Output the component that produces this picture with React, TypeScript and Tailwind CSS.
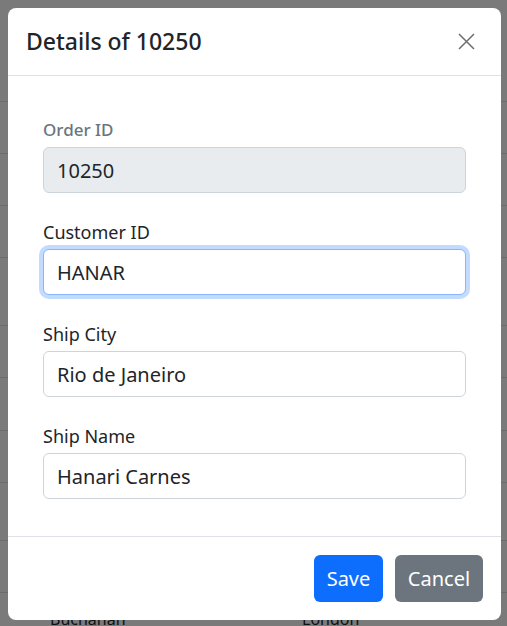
import React from "react"

const sysFont = "font-['Segoe_UI','Noto_Sans','Open_Sans',sans-serif]"
const comicFont = "font-['Comic_Sans_MS','Noto_Sans',sans-serif]"

interface FieldProps {
  label: string
  value: string
  disabled?: boolean
  focused?: boolean
}

function Field({ label, value, disabled, focused }: FieldProps) {
  return (
    <div className="flex flex-col">
      <label
        className={`h-[26px] mb-[4px] flex items-center ${
          disabled ? `${sysFont} text-[17px] text-[#6c757d] font-medium` : `${comicFont} text-[18px] text-[#212529]`
        }`}
      >
        {label}
      </label>
      <input
        type="text"
        readOnly
        disabled={disabled}
        value={value}
        className={`h-[46px] w-full rounded-[6px] border px-[13px] text-[20px] text-[#212529] outline-none ${
          disabled ? `${sysFont} bg-[#e9ecef] border-[#ced4da]` : `${comicFont} bg-white`
        } ${
          focused
            ? "border-[#86b7fe] shadow-[0_0_0_4px_rgba(13,110,253,0.25)]"
            : "border-[#ced4da]"
        }`}
      />
    </div>
  )
}

function BackgroundTable() {
  const rows = [
    { h: "h-[102px]" },
    { h: "h-[52px]" },
    { h: "h-[52px]" },
    { h: "h-[52px]" },
    { h: "h-[68px]" },
    { h: "h-[52px]" },
    { h: "h-[53px]" },
    { h: "h-[52px]" },
    { h: "h-[58px]" },
    { h: "h-[52px]" },
  ]
  return (
    <div className={`bg-white ${sysFont} text-[16px] text-[#212529]`}>
      {rows.map((r, i) => (
        <div key={i} className={`${r.h} border-b border-[#dee2e6]`} />
      ))}
      <div className="h-[52px] flex items-center">
        <span className="ml-[50px] w-[252px]">Buchanan</span>
        <span>London</span>
      </div>
    </div>
  )
}

export default function App() {
  return (
    <div className="relative h-[626px] w-[507px] overflow-hidden">
      <BackgroundTable />
      <div className="absolute inset-0 bg-black/[0.52]" />

      <div className="absolute left-[8px] top-[8px] w-[493px] rounded-[8px] bg-white flex flex-col">
        <div className="h-[68px] border-b border-[#dee2e6] px-[18px] flex items-center justify-between">
          <h5 className={`${sysFont} text-[23px] font-medium text-[#212529]`}>Details of 10250</h5>
          <button className="w-[17px] h-[18px] mr-[8px] flex items-center justify-center">
            <svg width="17" height="17" viewBox="0 0 17 17" fill="none">
              <path d="M1 1L16 16M16 1L1 16" stroke="#6e6e6e" strokeWidth="1.5" />
            </svg>
          </button>
        </div>

        <div className="pt-[41px] pb-[37px] px-[35px] flex flex-col gap-[26px]">
          <Field label="Order ID" value="10250" disabled />
          <Field label="Customer ID" value="HANAR" focused />
          <Field label="Ship City" value="Rio de Janeiro" />
          <Field label="Ship Name" value="Hanari Carnes" />
        </div>

        <div className="h-[84px] border-t border-[#dee2e6] flex items-center justify-end gap-[12px] pr-[18px]">
          <button className={`${sysFont} h-[47px] w-[69px] rounded-[6px] bg-[#0d6efd] text-white text-[20px]`}>
            Save
          </button>
          <button className={`${sysFont} h-[47px] w-[88px] rounded-[6px] bg-[#6c757d] text-white text-[20px]`}>
            Cancel
          </button>
        </div>
      </div>
    </div>
  )
}
